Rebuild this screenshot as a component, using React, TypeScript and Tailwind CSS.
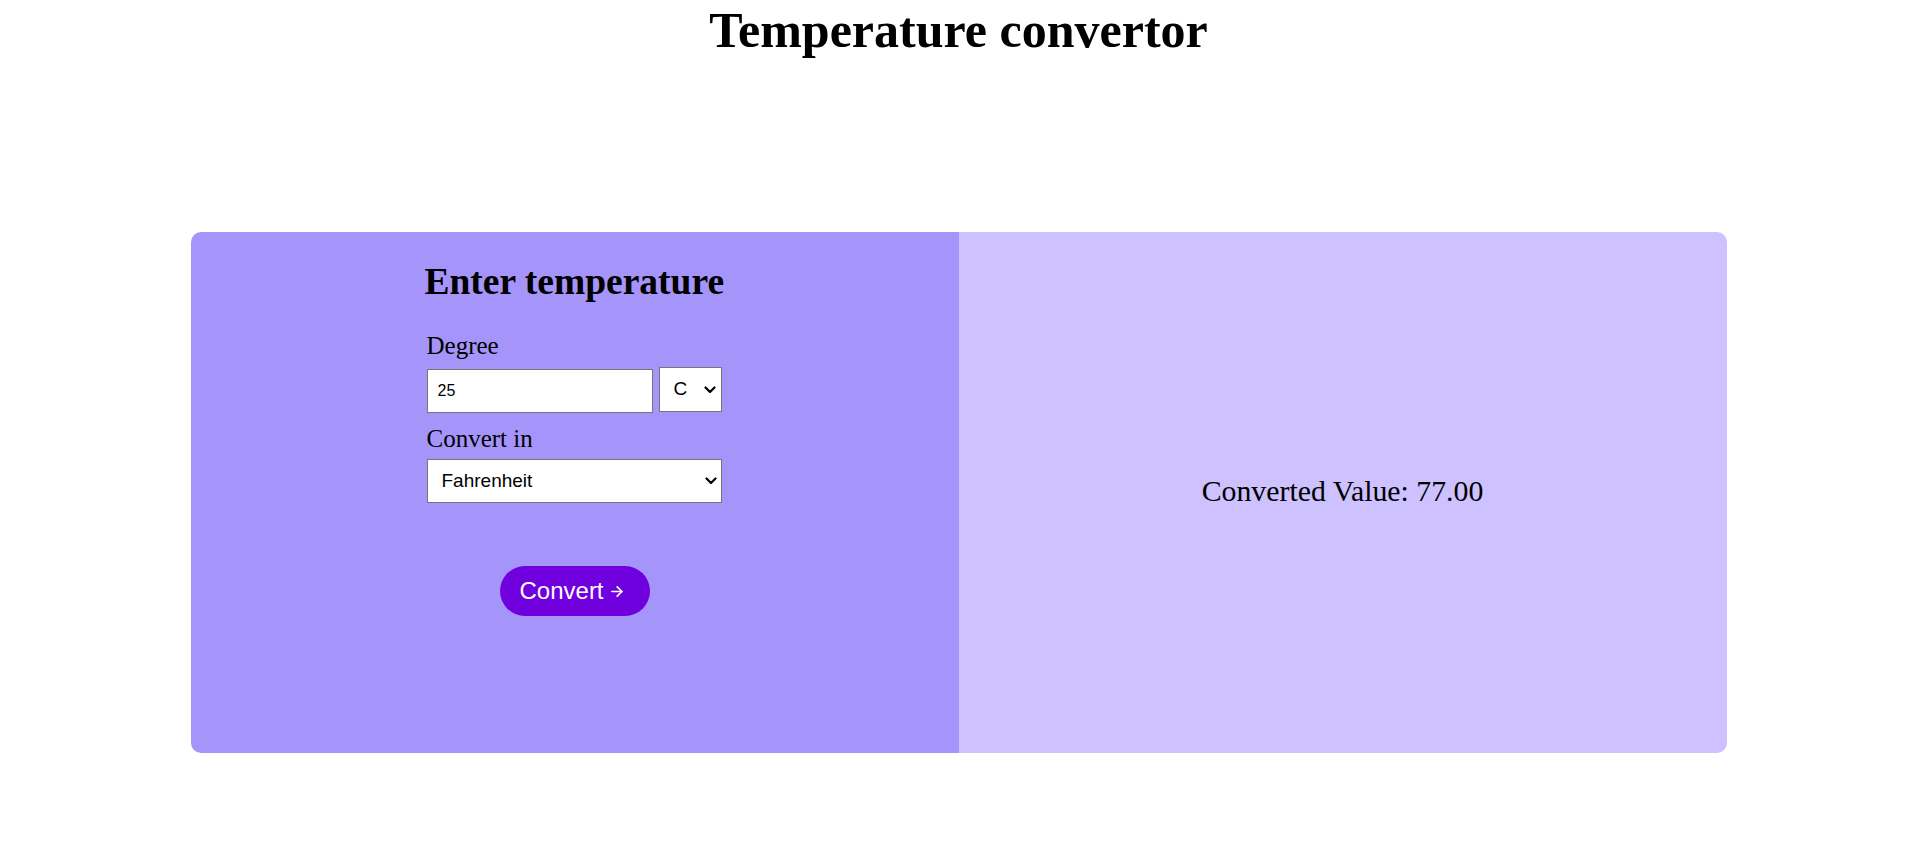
import { useState } from "react";

function Chevron() {
  return (
    <svg
      width="12"
      height="8"
      viewBox="0 0 12 8"
      className="pointer-events-none absolute right-[6px] top-1/2 -translate-y-1/2"
      fill="none"
      stroke="black"
      strokeWidth="2.2"
      strokeLinecap="round"
      strokeLinejoin="round"
    >
      <path d="M1.5 1.5 L6 6 L10.5 1.5" />
    </svg>
  );
}

function ArrowIcon() {
  return (
    <svg
      width="12"
      height="11"
      viewBox="0 0 12 11"
      fill="none"
      stroke="white"
      strokeWidth="1.7"
      strokeLinecap="round"
      strokeLinejoin="round"
    >
      <path d="M0.8 5.5 H11" />
      <path d="M6.2 0.9 L10.9 5.5 L6.2 10.1" />
    </svg>
  );
}

function toValue(deg: number, from: string, to: string) {
  let c = deg;
  if (from === "F") c = ((deg - 32) * 5) / 9;
  if (from === "K") c = deg - 273.15;
  if (to === "Fahrenheit") return (c * 9) / 5 + 32;
  if (to === "Kelvin") return c + 273.15;
  return c;
}

export default function App() {
  const [degree, setDegree] = useState("25");
  const [unit, setUnit] = useState("C");
  const [target, setTarget] = useState("Fahrenheit");
  const [result, setResult] = useState(() => toValue(25, "C", "Fahrenheit"));

  return (
    <div className="min-h-screen bg-white font-['Liberation_Serif','Times_New_Roman',serif] text-black">
      <h1 className="pt-[2px] text-center text-[50px] font-bold leading-[56px]">
        Temperature convertor
      </h1>

      <div className="mx-auto mt-[174px] flex h-[521px] w-[1536px] overflow-hidden rounded-[10px]">
        <div className="flex flex-1 flex-col items-center bg-[#a594f9] pt-[29px]">
          <div className="flex w-[296px] flex-col">
            <h2 className="-ml-[2px] whitespace-nowrap text-[37.5px] font-bold leading-[42px]">
              Enter temperature
            </h2>

            <label className="mt-[29px] text-[25px] leading-[28px]">Degree</label>
            <div className="mt-[7px] flex items-start">
              <input
                type="text"
                value={degree}
                onChange={(e) => setDegree(e.target.value)}
                className="mt-[2px] h-[44px] w-[226px] border border-[#767676] bg-white pl-[10px] font-['Liberation_Sans',Arial,sans-serif] text-[16px] text-black outline-none"
              />
              <div className="relative ml-[6px]">
                <select
                  value={unit}
                  onChange={(e) => setUnit(e.target.value)}
                  className="h-[45px] w-[63px] appearance-none rounded-none border border-[#767676] bg-white pl-[14px] font-['Liberation_Sans',Arial,sans-serif] text-[19px] text-black outline-none"
                >
                  <option value="C">C</option>
                  <option value="F">F</option>
                  <option value="K">K</option>
                </select>
                <Chevron />
              </div>
            </div>

            <label className="mt-[12px] text-[25px] leading-[28px]">Convert in</label>
            <div className="relative mt-[6px]">
              <select
                value={target}
                onChange={(e) => setTarget(e.target.value)}
                className="h-[44px] w-[295px] appearance-none rounded-none border border-[#767676] bg-white pl-[14px] font-['Liberation_Sans',Arial,sans-serif] text-[19px] text-black outline-none"
              >
                <option>Celsius</option>
                <option>Fahrenheit</option>
                <option>Kelvin</option>
              </select>
              <Chevron />
            </div>

            <button
              onClick={() => setResult(toValue(parseFloat(degree) || 0, unit, target))}
              className="mt-[63px] flex h-[50px] w-[150px] items-center gap-[7px] self-center rounded-full bg-[#7000dd] pl-[20px] font-['Liberation_Sans',Arial,sans-serif] text-[24px] text-white"
            >
              <span>Convert</span>
              <ArrowIcon />
            </button>
          </div>
        </div>

        <div className="flex flex-1 items-center justify-center bg-[#cdc1ff]">
          <p className="mb-[4px] text-[29.8px] leading-[34px]">
            Converted Value: {result.toFixed(2)}
          </p>
        </div>
      </div>
    </div>
  );
}
